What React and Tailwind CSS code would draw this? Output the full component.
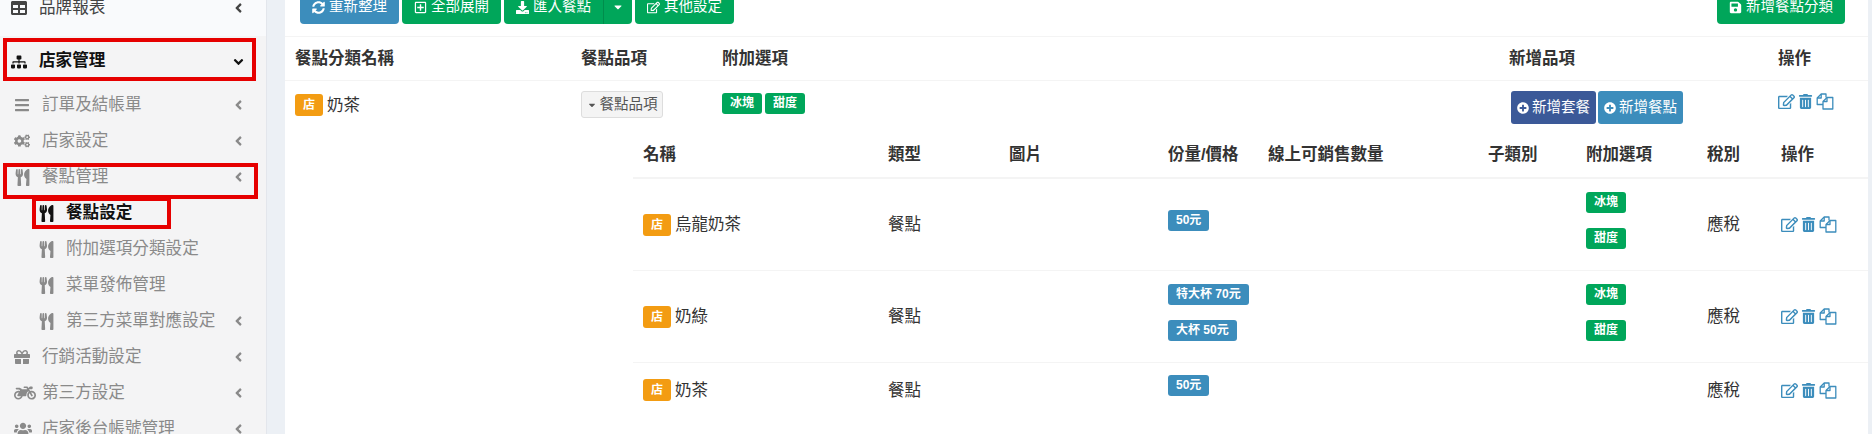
import React from "react";
import {
  FaTable,
  FaSitemap,
  FaBars,
  FaCogs,
  FaUtensils,
  FaGift,
  FaMotorcycle,
  FaUsers,
  FaAngleLeft,
  FaAngleDown,
  FaSyncAlt,
  FaRegPlusSquare,
  FaDownload,
  FaCaretDown,
  FaRegEdit,
  FaTrashAlt,
  FaSave,
  FaPlusCircle,
} from "react-icons/fa";

const NavItem = ({ icon: Icon, label, sub, bold, arrow = "left", iconSize = 16, className = "", box }) => (
  <div className={`relative flex h-9 items-center ${sub ? "pl-[38px]" : "pl-[14px]"} ${className}`}>
    <span className="flex w-[28px] shrink-0 items-center">
      <Icon size={iconSize} />
    </span>
    <span className={`whitespace-nowrap text-[16.6px] ${bold ? "font-bold" : ""}`}>{label}</span>
    {arrow === "left" && <FaAngleLeft size={15} className="absolute right-[20px] top-1/2 -translate-y-1/2" />}
    {arrow === "down" && <FaAngleDown size={15} className="absolute right-[20px] top-1/2 -translate-y-1/2" />}
    {box && <div className={`absolute border-4 border-[#e60000] ${box}`}></div>}
  </div>
);

const Sidebar = () => (
  <aside className="w-[267px] shrink-0 overflow-hidden border-r border-[#e3e6ec] bg-[#f4f4f5]">
    <div className="h-[36px] bg-[#f9fafc]">
      <NavItem icon={FaTable} label="品牌報表" className="-translate-y-[10px] !pl-[11px] text-[#444]" />
    </div>
    <NavItem
      icon={FaSitemap}
      label="店家管理"
      bold
      arrow="down"
      className="!h-[51px] !pl-[11px] text-[#111]"
      box="left-[3px] top-[2px] h-[43px] w-[253px]"
    />
    <div className="text-[#8a8a8a]">
      <NavItem icon={FaBars} label="訂單及結帳單" />
      <NavItem icon={FaCogs} label="店家設定" />
      <NavItem icon={FaUtensils} iconSize={17} label="餐點管理" box="left-[3px] top-[4px] h-[36px] w-[255px]" />
      <NavItem
        icon={FaUtensils}
        iconSize={17}
        label="餐點設定"
        sub
        bold
        arrow={null}
        className="text-[#111]"
        box="left-[32px] top-[2px] h-[32px] w-[139px]"
      />
      <NavItem icon={FaUtensils} iconSize={17} label="附加選項分類設定" sub arrow={null} />
      <NavItem icon={FaUtensils} iconSize={17} label="菜單發佈管理" sub arrow={null} />
      <NavItem icon={FaUtensils} iconSize={17} label="第三方菜單對應設定" sub />
      <NavItem icon={FaGift} label="行銷活動設定" />
      <NavItem icon={FaMotorcycle} label="第三方設定" iconSize={22} />
      <NavItem icon={FaUsers} label="店家後台帳號管理" iconSize={18} />
    </div>
  </aside>
);

const ToolButton = ({ icon: Icon, label, className = "bg-[#00a65a]" }) => (
  <button className={`flex h-[34px] items-center gap-1 rounded px-[12px] text-[14.5px] text-white ${className}`}>
    <Icon size={13} />
    {label}
  </button>
);

const Tag = ({ children, color = "bg-[#00a65a]" }) => (
  <span className={`inline-block h-[21px] whitespace-nowrap rounded-[3px] px-2 text-[12px] font-bold leading-[21px] text-white ${color}`}>
    {children}
  </span>
);

const StoreBadge = () => (
  <span className="mr-1 inline-flex h-[22px] w-[28px] items-center justify-center rounded-[3px] bg-[#f39c12] text-[12px] font-bold text-white">
    店
  </span>
);

// fa-files-o, the react-icons copy icon has other corners
const FilesIcon = () => (
  <svg width="18" height="17" viewBox="0 0 18 17" fill="none" stroke="currentColor" strokeWidth="1.3" strokeLinejoin="round">
    <path d="M7 11.5H1.2V5L5.2 1H10V4.5" />
    <path d="M5.2 1V5H1.2" />
    <path d="M7 8.5L11 4.5H16.8V16H7Z" />
    <path d="M11 4.5V8.5H7" />
  </svg>
);

const RowActions = () => (
  <div className="flex items-center gap-[3px] text-[#3c8dbc]">
    <FaRegEdit size={17} />
    <FaTrashAlt size={15} />
    <FilesIcon />
  </div>
);

const outerColumns = "grid grid-cols-[286px_141px_787px_269px_1fr]";
const subColumns = "grid grid-cols-[245px_121px_159px_100px_220px_98px_121px_74px_1fr]";

const items = [
  { name: "烏龍奶茶", prices: ["50元"], addons: ["冰塊", "甜度"], rowClass: "h-[92px] border-b" },
  { name: "奶綠", prices: ["特大杯 70元", "大杯 50元"], addons: ["冰塊", "甜度"], rowClass: "h-[92px] border-b" },
  { name: "奶茶", prices: ["50元"], addons: [], rowClass: "h-[54px]" },
];

const ItemTable = () => (
  <div className="ml-[348px]">
    <div className={`${subColumns} h-[48px] items-center border-b-2 border-[#f4f4f4] pl-[10px] text-[16.5px] font-bold text-[#333]`}>
      <span>名稱</span>
      <span>類型</span>
      <span>圖片</span>
      <span>份量/價格</span>
      <span>線上可銷售數量</span>
      <span>子類別</span>
      <span>附加選項</span>
      <span>稅別</span>
      <span>操作</span>
    </div>
    {items.map((item) => (
      <div
        key={item.name}
        className={`${subColumns} ${item.rowClass} items-center border-[#f4f4f4] pl-[10px] text-[16.5px] text-[#333]`}
      >
        <div className="flex items-center">
          <StoreBadge />
          {item.name}
        </div>
        <span>餐點</span>
        <span></span>
        <div className="flex flex-col items-start gap-[15px] pb-[9px]">
          {item.prices.map((p) => (
            <Tag key={p} color="bg-[#3c8dbc]">
              {p}
            </Tag>
          ))}
        </div>
        <span></span>
        <span></span>
        <div className="flex flex-col items-start gap-[15px] pb-[9px]">
          {item.addons.map((a) => (
            <Tag key={a}>{a}</Tag>
          ))}
        </div>
        <span>應稅</span>
        <RowActions />
      </div>
    ))}
  </div>
);

export default function App() {
  return (
    <div
      className="flex h-[434px] w-[1872px] overflow-hidden bg-[#ecf0f5]"
      style={{ fontFamily: '"Liberation Sans","Noto Sans CJK TC",sans-serif' }}
    >
      <Sidebar />
      <main className="ml-[18px] w-[1583px] shrink-0 bg-white">
        {/* Toolbar, cut off by the top of the window */}
        <div className="flex h-[37px] items-end justify-between border-b border-[#f4f4f4] pb-[12px] pl-[15px] pr-[23px]">
          <div className="flex gap-[3px]">
            <ToolButton icon={FaSyncAlt} label="重新整理" className="bg-[#3c8dbc]" />
            <ToolButton icon={FaRegPlusSquare} label="全部展開" />
            <div className="flex">
              <ToolButton icon={FaDownload} label="匯入餐點" className="rounded-r-none bg-[#00a65a]" />
              <button className="flex h-[34px] w-[29px] items-center justify-center rounded-r border-l border-[#008d4c] bg-[#00a65a] text-white">
                <FaCaretDown size={12} />
              </button>
            </div>
            <ToolButton icon={FaRegEdit} label="其他設定" />
          </div>
          <ToolButton icon={FaSave} label="新增餐點分類" />
        </div>

        {/* Category table */}
        <div className={`${outerColumns} h-[44px] items-center border-b border-[#f4f4f4] pl-[10px] text-[16.5px] font-bold text-[#333]`}>
          <span>餐點分類名稱</span>
          <span>餐點品項</span>
          <span>附加選項</span>
          <span>新增品項</span>
          <span>操作</span>
        </div>
        <div className={`${outerColumns} h-[50px] items-start pl-[10px] pt-[10px] text-[16.5px] text-[#333]`}>
          <div className="flex items-center pt-[2px]">
            <StoreBadge />
            <span>奶茶</span>
          </div>
          <button className="flex h-[27px] w-[82px] items-center justify-center gap-[3px] rounded-[3px] border border-[#ddd] bg-[#f4f4f4] text-[14.5px] text-[#555]">
            <FaCaretDown size={10} />
            餐點品項
          </button>
          <div className="flex gap-[3px] pt-[2px]">
            <Tag>冰塊</Tag>
            <Tag>甜度</Tag>
          </div>
          <div className="flex gap-[2px] pl-[2px]">
            <button className="flex h-[33px] w-[85px] items-center justify-center gap-[3px] rounded-[3px] bg-[#3b5998] text-[14.5px] text-white">
              <FaPlusCircle size={12} />
              新增套餐
            </button>
            <button className="flex h-[33px] w-[85px] items-center justify-center gap-[3px] rounded-[3px] bg-[#3c8dbc] text-[14.5px] text-white">
              <FaPlusCircle size={12} />
              新增餐點
            </button>
          </div>
          <div className="pt-[2px]">
            <RowActions />
          </div>
        </div>
        <ItemTable />
      </main>
    </div>
  );
}
